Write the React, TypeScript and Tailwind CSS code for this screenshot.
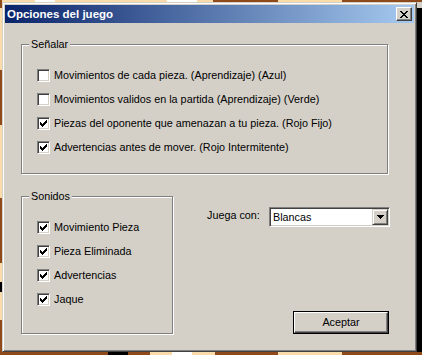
import React from "react";

const BROWN = "#8f4a1c";
const TAN = "#f9dcaa";
const WHITE = "#ffffff";
const BLACK = "#000000";

type Seg = [number, string];

const topSegs: Seg[] = [
  [2, BROWN], [33, TAN], [20, WHITE], [112, TAN], [30, WHITE], [16, TAN], [65, BROWN], [64, TAN], [80, BROWN],
];
const bottomSegs: Seg[] = [
  [108, BROWN], [20, BLACK], [22, BROWN], [22, TAN], [20, WHITE], [23, TAN], [63, BROWN], [64, TAN], [80, BROWN],
];
const leftSegs: Seg[] = [
  [6, BROWN], [62, TAN], [55, BROWN], [73, TAN], [65, BROWN], [19, TAN], [10, BLACK], [28, TAN], [32, BROWN],
];

function HStrip({ segs, h }: { segs: Seg[]; h: string }) {
  return (
    <div className={`flex shrink-0 ${h}`}>
      {segs.map(([w, c], i) => (
        <div key={i} style={{ width: w, background: c }} />
      ))}
    </div>
  );
}

function VStrip({ segs }: { segs: Seg[] }) {
  return (
    <div className="flex flex-col w-[2px] shrink-0">
      {segs.map(([h, c], i) => (
        <div key={i} style={{ height: h, background: c }} />
      ))}
    </div>
  );
}

function Pixels({ rows, color }: { rows: string[]; color: string }) {
  const h = rows.length;
  const w = rows[0].length;
  return (
    <svg width={w} height={h} viewBox={`0 0 ${w} ${h}`} shapeRendering="crispEdges" className="block">
      {rows.flatMap((r, y) =>
        r.split("").map((c, x) =>
          c === "#" ? <rect key={`${x}-${y}`} x={x} y={y} width={1} height={1} fill={color} /> : null
        )
      )}
    </svg>
  );
}

const CHECK = [
  "......#",
  ".....##",
  "#...###",
  "##.###.",
  "#####..",
  ".###...",
  "..#....",
];

const CLOSE_X = [
  "##....##",
  ".##..##.",
  "..####..",
  "...##...",
  "..####..",
  ".##..##.",
  "##....##",
];

const ARROW = ["#######", ".#####.", "..###..", "...#..."];

function CheckBox({ checked }: { checked: boolean }) {
  return (
    <div className="w-[13px] h-[13px] shrink-0 bg-white border border-t-[#808080] border-l-[#808080] border-b-white border-r-white shadow-[inset_1px_1px_0_#404040,inset_-1px_-1px_0_#d4d0c8] flex items-center justify-center">
      {checked && <Pixels rows={CHECK} color="#000" />}
    </div>
  );
}

function Row({ checked, label }: { checked: boolean; label: string }) {
  return (
    <div className="flex items-center gap-[4px] h-[13px]">
      <CheckBox checked={checked} />
      <span className="text-[10.8px] leading-[13px] text-black whitespace-nowrap">{label}</span>
    </div>
  );
}

function Group({
  title,
  width,
  pb,
  children,
}: {
  title: string;
  width: string;
  pb: string;
  children: React.ReactNode;
}) {
  return (
    <fieldset
      className={`${width} shrink-0 border border-[#808080] shadow-[inset_1px_1px_0_#fff,1px_1px_0_#fff] m-0 p-0`}
    >
      <legend className="ml-[7px] px-[2px] bg-[#d4d0c8] text-[10.8px] leading-[13px] text-black">{title}</legend>
      <div className={`flex flex-col gap-[11px] pl-[15px] pt-[18px] ${pb}`}>{children}</div>
    </fieldset>
  );
}

export default function App() {
  return (
    <div className="w-[422px] h-[355px] flex flex-col overflow-hidden bg-[#f9dcaa] font-['Liberation_Sans',Arial,sans-serif]">
      <HStrip segs={topSegs} h="h-[2px]" />
      <div className="flex h-[350px] shrink-0">
        <VStrip segs={leftSegs} />
        {/* Window */}
        <div className="w-[415px] h-[350px] shrink-0 bg-[#d4d0c8] border border-t-[#d4d0c8] border-l-[#d4d0c8] border-b-[#404040] border-r-[#404040] shadow-[inset_1px_1px_0_#fff,inset_-1px_-1px_0_#808080] p-[2px] flex flex-col">
          {/* Title bar */}
          <div className="h-[18px] shrink-0 flex items-center justify-between bg-[linear-gradient(to_right,#0a246a,#a6caf0)] pl-[2px] pr-[2px]">
            <span className="text-white font-bold text-[11.5px] leading-[18px] whitespace-nowrap">Opciones del juego</span>
            <div className="w-[16px] h-[14px] bg-[#d4d0c8] border border-t-white border-l-white border-b-[#404040] border-r-[#404040] shadow-[inset_-1px_-1px_0_#808080] flex items-center justify-center">
              <Pixels rows={CLOSE_X} color="#000" />
            </div>
          </div>
          {/* Client area */}
          <div className="flex-1 flex flex-col pl-[16px] pt-[15px]">
            <Group title="Señalar" width="w-[367px]" pb="pb-[19px]">
              <Row checked={false} label="Movimientos de cada pieza. (Aprendizaje) (Azul)" />
              <Row checked={false} label="Movimientos validos en la partida (Aprendizaje) (Verde)" />
              <Row checked={true} label="Piezas del oponente que amenazan a tu pieza. (Rojo Fijo)" />
              <Row checked={true} label="Advertencias antes de mover. (Rojo Intermitente)" />
            </Group>
            <div className="flex mt-[16px]">
              <Group title="Sonidos" width="w-[152px]" pb="pb-[18px]">
                <Row checked={true} label="Movimiento Pieza" />
                <Row checked={true} label="Pieza Eliminada" />
                <Row checked={true} label="Advertencias" />
                <Row checked={true} label="Jaque" />
              </Group>
              <div className="ml-[34px] w-[183px] flex flex-col pt-[17px]">
                <div className="flex items-start justify-between">
                  <span className="mt-[2px] text-[10.8px] leading-[13px] text-black whitespace-nowrap">Juega con:</span>
                  <div className="w-[121px] h-[20px] bg-white border border-t-[#808080] border-l-[#808080] border-b-white border-r-white shadow-[inset_1px_1px_0_#404040,inset_-1px_-1px_0_#d4d0c8] p-[1px] flex">
                    <div className="flex-1 flex items-center pl-[2px] text-[10.8px] leading-[13px] text-black">Blancas</div>
                    <div className="w-[16px] h-[16px] bg-[#d4d0c8] border border-t-[#d4d0c8] border-l-[#d4d0c8] border-b-[#404040] border-r-[#404040] shadow-[inset_1px_1px_0_#fff,inset_-1px_-1px_0_#808080] flex items-center justify-center">
                      <Pixels rows={ARROW} color="#000" />
                    </div>
                  </div>
                </div>
                <div className="self-end mr-[1px] mt-[84px] w-[96px] h-[23px] border border-black">
                  <div className="w-full h-full bg-[#d4d0c8] border border-t-white border-l-white border-b-[#404040] border-r-[#404040] shadow-[inset_-1px_-1px_0_#808080] flex items-center justify-center text-[10.8px] leading-[13px] text-black">
                    Aceptar
                  </div>
                </div>
              </div>
            </div>
          </div>
        </div>
        <div className="flex-1 flex flex-col">
          <div className="h-[6px] bg-[#d4d0c8]" />
          <div className="flex-1 bg-black" />
        </div>
      </div>
      <HStrip segs={bottomSegs} h="h-[3px]" />
    </div>
  );
}
